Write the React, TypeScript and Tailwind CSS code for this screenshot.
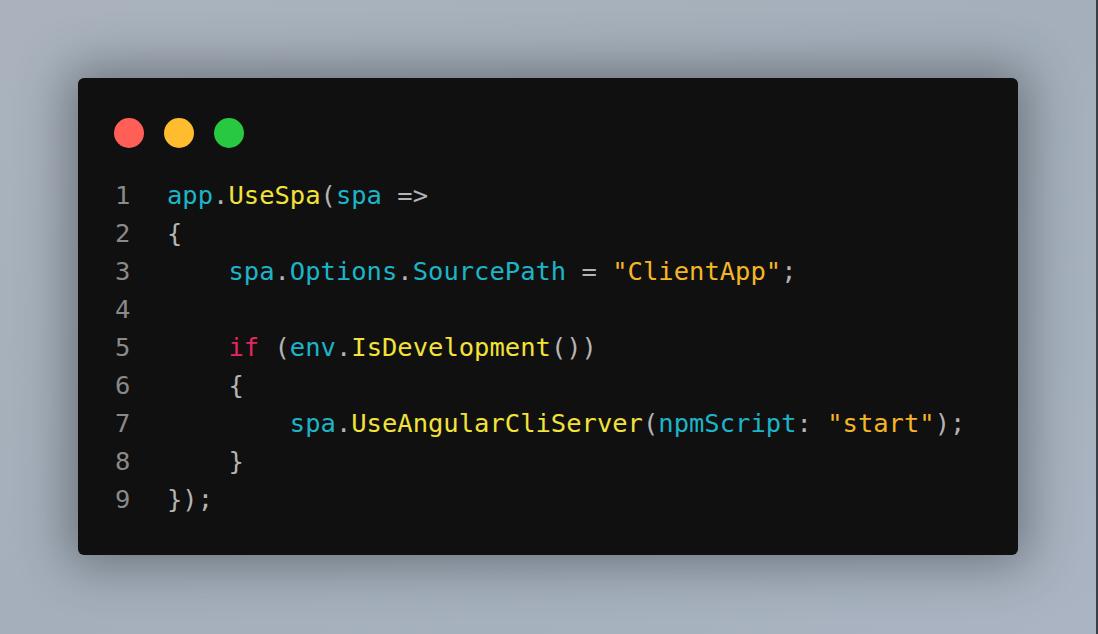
import React from 'react';

type Tok = [string, string];

const C = 'text-[#1db4c8]';
const Y = 'text-[#f3e23a]';
const S = 'text-[#f4b625]';
const K = 'text-[#e2285c]';
const P = 'text-[#b4b4b4]';

const lines: Tok[][] = [
  [['app', C], ['.', P], ['UseSpa', Y], ['(', P], ['spa', C], [' =>', P]],
  [['{', P]],
  [['    ', P], ['spa', C], ['.', P], ['Options', C], ['.', P], ['SourcePath', C], [' = ', P], ['"ClientApp"', S], [';', P]],
  [],
  [['    ', P], ['if', K], [' (', P], ['env', C], ['.', P], ['IsDevelopment', Y], ['())', P]],
  [['    {', P]],
  [['        ', P], ['spa', C], ['.', P], ['UseAngularCliServer', Y], ['(', P], ['npmScript', C], [': ', P], ['"start"', S], [');', P]],
  [['    }', P]],
  [['});', P]],
];

export default function App() {
  return (
    <div className="w-[1098px] h-[634px] overflow-hidden bg-gradient-to-br from-[#aab3bd] via-[#a4afbb] to-[#aab4c2] border-r-2 border-[#3a3e44] pt-[78px] pl-[78px]">
      {/* Code window */}
      <div className="w-[940px] h-[477px] bg-[#101010] rounded-md shadow-[0_0_50px_10px_rgba(40,45,52,0.45)] pt-10 pl-9">
        <div className="flex gap-5">
          <span className="w-[30px] h-[30px] rounded-full bg-[#ff5f57]" />
          <span className="w-[30px] h-[30px] rounded-full bg-[#febc2e]" />
          <span className="w-[30px] h-[30px] rounded-full bg-[#28c840]" />
        </div>
        <div className="mt-[28px] font-['DejaVu_Sans_Mono',monospace] text-[25.5px] leading-[38px] whitespace-pre">
          {lines.map((toks, i) => (
            <div key={i} className="flex">
              <span className="w-[53px] pl-px text-[#8a8a8a]">{i + 1}</span>
              <span>
                {toks.map(([t, c], j) => (
                  <span key={j} className={c}>{t}</span>
                ))}
              </span>
            </div>
          ))}
        </div>
      </div>
    </div>
  );
}
